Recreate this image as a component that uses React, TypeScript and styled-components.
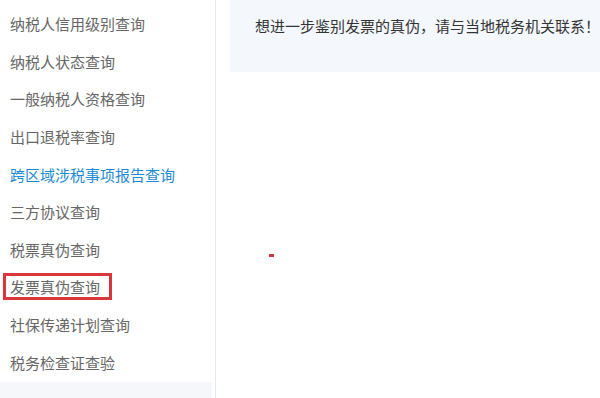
import styled, { createGlobalStyle } from "styled-components";

const GlobalStyle = createGlobalStyle`
  html, body {
    margin: 0;
    padding: 0;
    background: #fff;
    font-family: "Microsoft YaHei", "Noto Sans CJK SC", sans-serif;
  }
`;

const Page = styled.div`
  display: flex;
  width: 600px;
  height: 398px;
  overflow: hidden;
`;

const Sidebar = styled.nav`
  display: flex;
  flex-direction: column;
  width: 216px;
  flex-shrink: 0;
  padding-top: 5px;
  border-right: 1px solid #e6e8eb;
  box-sizing: border-box;
`;

const MenuItem = styled.div<{ $active?: boolean }>`
  display: flex;
  align-items: center;
  height: 37.6px;
  padding-left: 10px;
  font-size: 15px;
  color: ${({ $active }) => ($active ? "#1c8ad4" : "#666")};
  white-space: nowrap;
`;

const Boxed = styled.span`
  display: inline-block;
  margin-left: -7px;
  padding: 0 9px 0 4px;
  line-height: 21px;
  border: 3px solid #d9363d;
`;

const SidebarFooter = styled.div`
  margin-top: auto;
  height: 16px;
  margin-right: 3px;
  background: #f5f7fa;
`;

const Main = styled.main`
  display: flex;
  flex-direction: column;
  flex: 1;
  padding-left: 14px;
`;

const Notice = styled.div`
  display: flex;
  align-items: center;
  height: 72px;
  padding: 0 0 22px 25px;
  box-sizing: border-box;
  background: #f4f7fc;
  font-size: 15px;
  color: #333;
  white-space: nowrap;
`;

const Marker = styled.div`
  width: 5px;
  height: 3px;
  margin: 182px 0 0 39px;
  background: #d0343c;
`;

const items = [
  "纳税人信用级别查询",
  "纳税人状态查询",
  "一般纳税人资格查询",
  "出口退税率查询",
  "跨区域涉税事项报告查询",
  "三方协议查询",
  "税票真伪查询",
  "发票真伪查询",
  "社保传递计划查询",
  "税务检查证查验",
];

export default function App() {
  return (
    <>
      <GlobalStyle />
      <Page>
        <Sidebar>
          {items.map((label) => (
            <MenuItem key={label} $active={label === "跨区域涉税事项报告查询"}>
              {label === "发票真伪查询" ? <Boxed>{label}</Boxed> : label}
            </MenuItem>
          ))}
          <SidebarFooter />
        </Sidebar>
        <Main>
          <Notice>想进一步鉴别发票的真伪，请与当地税务机关联系！</Notice>
          <Marker />
        </Main>
      </Page>
    </>
  );
}
